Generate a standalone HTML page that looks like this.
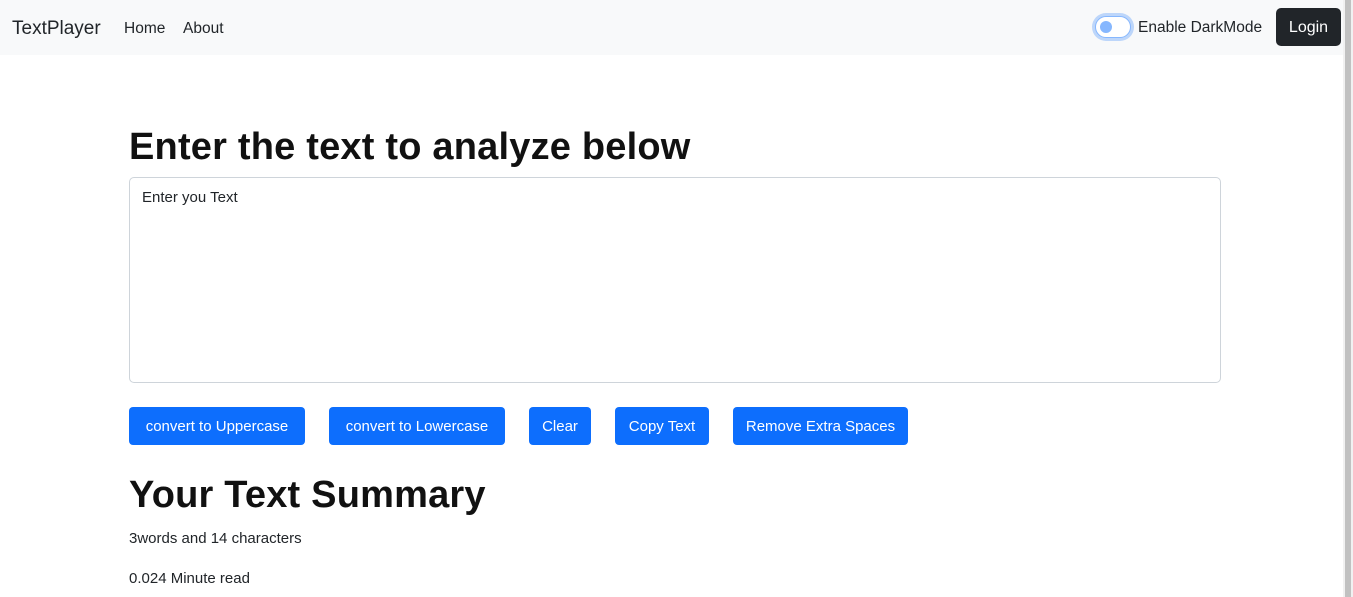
<!DOCTYPE html>
<html><head><style>
body{margin:0;font-family:"Liberation Sans",sans-serif;color:#212529;background:#fff;width:1353px;height:597px;overflow:hidden;position:relative}
.nav{position:absolute;left:0;top:0;width:1343px;height:55px;background:#f8f9fa}
.abs{position:absolute;white-space:nowrap}
.scroll{position:absolute;right:0;top:0;width:10px;height:597px;background:#f1f1f1}
.thumb{position:absolute;right:2px;top:0;width:6px;height:597px;background:#c1c1c1}
.btn{position:absolute;top:407px;height:38px;background:#0d6efd;color:#fff;border-radius:4px;font-size:15px;line-height:40px;text-align:center}
h1{margin:0;font-weight:bold;color:#111;letter-spacing:0.2px}
</style></head><body>
<div class="nav">
<div class="abs" style="left:12px;top:18px;font-size:19px">TextPlayer</div>
<div class="abs" style="left:124px;top:20px;font-size:15.5px">Home</div>
<div class="abs" style="left:183px;top:20px;font-size:15.5px">About</div>
<div class="abs" style="left:1095px;top:16px;width:34px;height:20px;border-radius:11px;background:#fff;border:1px solid #86b7fe;box-shadow:0 0 0 3px rgba(13,110,253,.25)"><div style="position:absolute;left:4px;top:4px;width:12px;height:12px;border-radius:50%;background:#86b7fe"></div></div>
<div class="abs" style="left:1138px;top:19px;font-size:15.5px">Enable DarkMode</div>
<div class="abs" style="left:1276px;top:8px;width:65px;height:38px;background:#212529;color:#fff;border-radius:5px;font-size:16px;line-height:40px;text-align:center">Login</div>
</div>
<div class="scroll"><div class="thumb"></div></div>
<h1 class="abs" style="left:129px;top:126px;font-size:38px">Enter the text to analyze below</h1>
<div class="abs" style="left:129px;top:177px;width:1090px;height:204px;border:1px solid #ced4da;border-radius:5px"></div>
<div class="abs" style="left:142px;top:189px;font-size:15px">Enter you Text</div>
<div class="btn" style="left:129px;width:176px">convert to Uppercase</div>
<div class="btn" style="left:329px;width:176px">convert to Lowercase</div>
<div class="btn" style="left:529px;width:62px">Clear</div>
<div class="btn" style="left:615px;width:94px">Copy Text</div>
<div class="btn" style="left:733px;width:175px">Remove Extra Spaces</div>
<h1 class="abs" style="left:129px;top:474px;font-size:38px">Your Text Summary</h1>
<div class="abs" style="left:129px;top:530px;font-size:15px">3words and 14 characters</div>
<div class="abs" style="left:129px;top:570px;font-size:15px">0.024 Minute read</div>
</body></html>
